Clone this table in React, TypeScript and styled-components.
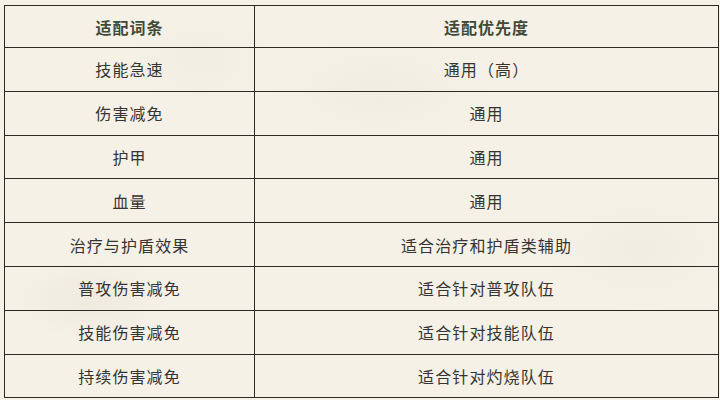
import React from "react";
import styled, { createGlobalStyle } from "styled-components";

const Global = createGlobalStyle`
  html, body {
    margin: 0;
    padding: 0;
    width: 720px;
    height: 400px;
    overflow: hidden;
    background: #f4f0e6;
  }
  * { box-sizing: border-box; }
`;

const Page = styled.div`
  width: 720px;
  height: 400px;
  padding: 5px 0 0 4px;
  background:
    radial-gradient(ellipse 120px 60px at 90px 300px, rgba(215, 205, 185, 0.18), transparent 70%),
    radial-gradient(ellipse 160px 80px at 380px 90px, rgba(225, 215, 195, 0.15), transparent 70%),
    radial-gradient(ellipse 140px 90px at 640px 250px, rgba(225, 215, 195, 0.15), transparent 70%),
    radial-gradient(ellipse 100px 70px at 200px 60px, rgba(230, 222, 205, 0.18), transparent 70%),
    #f5f1e7;
  font-family: "Noto Sans CJK SC", "Noto Sans", sans-serif;
`;

const Table = styled.table`
  border-collapse: collapse;
  table-layout: fixed;
  width: 714px;
`;

const Col = styled.col<{ $w: number }>`
  width: ${(p) => p.$w}px;
`;

const Row = styled.tr<{ $head?: boolean }>`
  height: ${(p) => (p.$head ? 42 : 43.8)}px;
`;

const HeadCell = styled.th`
  border: 1.3px solid #2e2a23;
  padding: 0;
  text-align: center;
  vertical-align: middle;
  font-size: 16px;
  font-weight: 700;
  letter-spacing: 1px;
  color: #3f4a38;
`;

const Cell = styled.td`
  border: 1.3px solid #2e2a23;
  padding: 0;
  text-align: center;
  vertical-align: middle;
  font-size: 16px;
  font-weight: 400;
  letter-spacing: 1.1px;
  color: #363533;
`;

const rows: [string, string][] = [
  ["技能急速", "通用（高）"],
  ["伤害减免", "通用"],
  ["护甲", "通用"],
  ["血量", "通用"],
  ["治疗与护盾效果", "适合治疗和护盾类辅助"],
  ["普攻伤害减免", "适合针对普攻队伍"],
  ["技能伤害减免", "适合针对技能队伍"],
  ["持续伤害减免", "适合针对灼烧队伍"],
];

export default function App() {
  return (
    <>
      <Global />
      <Page>
        <Table>
          <colgroup>
            <Col $w={250} />
            <Col $w={464} />
          </colgroup>
          <thead>
            <Row $head>
              <HeadCell>适配词条</HeadCell>
              <HeadCell>适配优先度</HeadCell>
            </Row>
          </thead>
          <tbody>
            {rows.map(([a, b]) => (
              <Row key={a}>
                <Cell>{a}</Cell>
                <Cell>{b}</Cell>
              </Row>
            ))}
          </tbody>
        </Table>
      </Page>
    </>
  );
}
